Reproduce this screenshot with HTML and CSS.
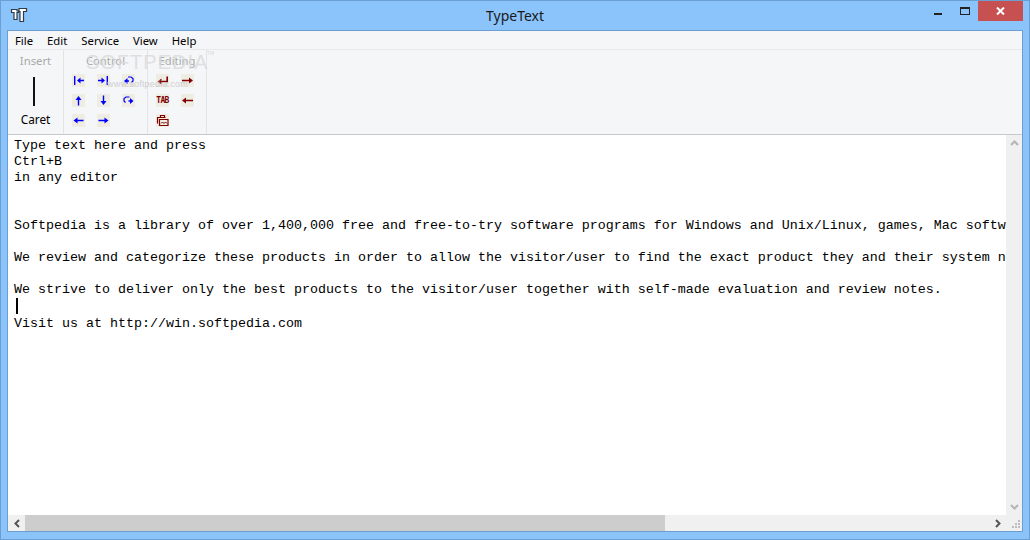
FILE: index.html
```html
<!DOCTYPE html>
<html lang="en">
<head>
<meta charset="utf-8">
<title>TypeText</title>
<link rel="stylesheet" href="styles.css">
</head>
<body>
<div class="window">
  <header class="titlebar">
    <svg class="app-icon" width="18" height="15" viewBox="0 0 18 15">
      <path d="M1.5 4.5V1.5H7V3H9V0.5H16.5V3.5H13.5V13.5H10V3.5H8.5V4.5H7V11.5H4V4.5Z" fill="#fff" stroke="#2f3b47" stroke-width="1.2"/>
    </svg>
    <div class="title">TypeText</div>
    <div class="controls">
      <span class="ctl"><i class="min"></i></span>
      <span class="ctl"><i class="max"></i></span>
      <span class="close">
        <svg width="9" height="8" viewBox="0 0 9 8"><path d="M1 0.5L8 7.5M8 0.5L1 7.5" stroke="#fff" stroke-width="2"/></svg>
      </span>
    </div>
  </header>
  <div class="client">
    <nav class="menu">
      <span>File</span><span>Edit</span><span>Service</span><span>View</span><span>Help</span>
    </nav>
    <section class="ribbon">
      <div class="group insert">
        <div class="gtitle">Insert</div>
        <div class="caret-bar"></div>
        <div class="caret-label">Caret</div>
      </div>
      <div class="group control">
        <div class="gtitle">Control</div>
        <div class="grid grid3">
          <span class="btn blue"><svg viewBox="0 0 13 13"><path d="M2 2h1.4v9H2zM5 6.5L8.5 3.5V5.8H12V7.2H8.5V9.5Z"/></svg></span>
          <span class="btn blue"><svg viewBox="0 0 13 13"><path d="M9.6 2H11v9H9.6zM8 6.5L4.5 3.5V5.8H1V7.2H4.5V9.5Z"/></svg></span>
          <span class="btn blue"><svg viewBox="0 0 13 13"><path d="M2 7L5.5 4V6.3H7V7.7H5.5V10Z"/><path d="M6 3H9L11 4.5V7L9.5 8.5" fill="none" stroke="#00f" stroke-width="1.2"/></svg></span>
          <span class="btn blue"><svg viewBox="0 0 13 13"><path d="M6.5 2L9.5 6H7.2V11.5H5.8V6H3.5Z"/></svg></span>
          <span class="btn blue"><svg viewBox="0 0 13 13"><path d="M6.5 11L9.5 7H7.2V1.5H5.8V7H3.5Z"/></svg></span>
          <span class="btn blue"><svg viewBox="0 0 13 13"><path d="M11.5 7L8 4V6.3H6.5V7.7H8V10Z"/><path d="M7.5 3H4L2 4.5V7L3.5 8.5" fill="none" stroke="#00f" stroke-width="1.2"/></svg></span>
          <span class="btn blue"><svg viewBox="0 0 13 13"><path d="M1.5 6.5L5.5 3.5V5.8H11.5V7.2H5.5V9.5Z"/></svg></span>
          <span class="btn blue"><svg viewBox="0 0 13 13"><path d="M11.5 6.5L7.5 3.5V5.8H1.5V7.2H7.5V9.5Z"/></svg></span>
        </div>
      </div>
      <div class="group editing">
        <div class="gtitle">Editing</div>
        <div class="grid grid2">
          <span class="btn red"><svg viewBox="0 0 13 13"><path d="M1.5 7.5L5.5 4.5V6.8H10.4V2.5H12V8.2H5.5V10.5Z"/></svg></span>
          <span class="btn red"><svg viewBox="0 0 13 13"><path d="M12 6.5L8 3.5V5.7H1V7.3H8V9.5Z"/></svg></span>
          <span class="btn tab">TAB</span>
          <span class="btn red"><svg viewBox="0 0 13 13"><path d="M1 6.5L5 3.5V5.7H12V7.3H5V9.5Z"/></svg></span>
          <span class="btn"><svg viewBox="0 0 13 13"><path d="M4.5 3V1.5H8.5V3M1.5 9.5V3.5H9.5M3.5 11.5V5.5H12V11.5Z" fill="none" stroke="#800000" stroke-width="1.2"/><path d="M5 9.5L6.5 8L8 9.5L9.5 8L11 9.5" fill="none" stroke="#800000"/></svg></span>
        </div>
      </div>
      <div class="wm wm-big">SOFTPEDIA</div>
      <div class="wm wm-tm">TM</div>
      <div class="wm wm-url">www.softpedia.com</div>
    </section>
    <main class="editor-row">
      <div class="editor">
        <div class="ln">Type text here and press</div>
        <div class="ln">Ctrl+B</div>
        <div class="ln">in any editor</div>
        <div class="ln">&nbsp;</div>
        <div class="ln">&nbsp;</div>
        <div class="ln">Softpedia is a library of over 1,400,000 free and free-to-try software programs for Windows and Unix/Linux, games, Mac software, Windows drivers</div>
        <div class="ln">&nbsp;</div>
        <div class="ln">We review and categorize these products in order to allow the visitor/user to find the exact product they and their system need.</div>
        <div class="ln">&nbsp;</div>
        <div class="ln">We strive to deliver only the best products to the visitor/user together with self-made evaluation and review notes.</div>
        <div class="ln caret-line"><i class="text-caret"></i></div>
        <div class="ln">Visit us at http://win.softpedia.com</div>
      </div>
      <aside class="vscroll">
        <svg width="9" height="6" viewBox="0 0 9 6"><path d="M1 5L4.5 1.5L8 5" fill="none" stroke="#b5b5b5" stroke-width="2"/></svg>
        <svg width="9" height="6" viewBox="0 0 9 6"><path d="M1 1L4.5 4.5L8 1" fill="none" stroke="#b5b5b5" stroke-width="2"/></svg>
      </aside>
    </main>
    <footer class="hscroll">
      <span class="arrow"><svg width="6" height="9" viewBox="0 0 6 9"><path d="M5 1L1.5 4.5L5 8" fill="none" stroke="#555" stroke-width="2"/></svg></span>
      <div class="track"><div class="thumb"></div></div>
      <span class="arrow"><svg width="6" height="9" viewBox="0 0 6 9"><path d="M1 1L4.5 4.5L1 8" fill="none" stroke="#555" stroke-width="2"/></svg></span>
      <svg class="grip" width="16" height="16" viewBox="0 0 16 16"><path d="M11 5h2v2h-2zM8 8h2v2H8zM11 8h2v2h-2zM5 11h2v2H5zM8 11h2v2H8zM11 11h2v2h-2z" fill="#bdbdbd"/></svg>
    </footer>
  </div>
</div>
</body>
</html>
```
FILE: styles.css
```css
html, body { margin: 0; height: 100%; }
body { overflow: hidden; font-family: "Noto Sans", "Open Sans", sans-serif; }
.window {
  box-sizing: border-box; width: 1030px; height: 540px;
  background: #8bc4fb; border: 1px solid #6b9fd2;
  display: flex; flex-direction: column; padding: 0 6px 7px;
}
.titlebar { height: 29px; flex: none; position: relative; }
.app-icon { position: absolute; left: 3px; top: 7px; }
.title { position: absolute; left: 0; right: 0; top: 5px; text-align: center; font-size: 14px; line-height: 20px; color: #1a1a1a; }
.controls { position: absolute; right: 0; top: 0; display: flex; height: 20px; }
.ctl { width: 26px; display: flex; align-items: center; justify-content: center; }
.min { width: 8px; height: 2px; background: #222; display: block; margin-top: 6px; margin-right: 2px; }
.max { box-sizing: border-box; width: 10px; height: 8px; border: 1px solid #222; border-top-width: 2px; display: block; }
.close { width: 45px; height: 20px; background: #c75050; display: flex; align-items: center; justify-content: center; }
.client {
  flex: 1; min-height: 0; display: flex; flex-direction: column;
  border: 1px solid #6b9fd2; background: #fff;
}
.menu { height: 18px; flex: none; background: #f5f6f7; display: flex; padding-left: 7px; gap: 14px; font-size: 11.3px; line-height: 19px; color: #000; border-bottom: 1px solid #e8e9ea; }
.ribbon { height: 84px; flex: none; background: #f5f6f7; border-bottom: 1px solid #c8c8c8; display: flex; position: relative; overflow: hidden; }
.group { box-sizing: border-box; border-right: 1px solid #e3e4e6; display: flex; flex-direction: column; align-items: center; }
.insert { width: 56px; }
.control { width: 84px; }
.editing { width: 59px; }
.gtitle { font-size: 11.3px; line-height: 14px; height: 14px; margin-top: 4px; color: #a9a9a9; }
.caret-bar { width: 2px; height: 29px; background: #111; margin: 9px 4px 0 0; }
.caret-label { font-size: 11.8px; line-height: 14px; color: #000; margin-top: 6px; }
.grid { display: grid; grid-auto-rows: 13px; row-gap: 7px; column-gap: 12px; margin-top: 6px; align-self: flex-start; margin-left: 8px; }
.grid3 { grid-template-columns: repeat(3, 13px); }
.grid2 { grid-template-columns: repeat(2, 13px); }
.btn { width: 13px; height: 13px; background: #efece3; display: block; }
.btn svg { width: 13px; height: 13px; display: block; }
.blue svg { fill: #00f; }
.red svg { fill: #800000; }
.tab { font: bold 8px/13px "DejaVu Sans Mono", monospace; color: #800000; text-align: center; letter-spacing: -0.6px; }
.wm { position: absolute; white-space: nowrap; }
.wm-big { left: 78px; top: 0; font-size: 20px; line-height: 24px; letter-spacing: 1px; color: #d9dadc; opacity: 0.8; font-family: "Liberation Sans", sans-serif; }
.wm-tm { left: 199px; top: -1px; font-size: 5px; line-height: 8px; color: #d8d9da; }
.wm-url { left: 99px; top: 27px; font-size: 9px; line-height: 14px; letter-spacing: 0.2px; color: #c8c9cb; opacity: 0.85; font-family: "Liberation Sans", sans-serif; }
.editor-row { flex: 1; min-height: 0; display: flex; }
.editor { flex: 1; min-width: 0; overflow: hidden; padding: 3px 0 0 6px; background: #fff; font: 13.33px/16px "Liberation Mono", "Courier New", monospace; color: #000; }
.ln { height: 16px; white-space: pre; }
.caret-line { height: 18px; }
.text-caret { display: block; width: 2px; height: 16px; background: #000; margin-left: 2px; }
.vscroll { width: 16px; flex: none; background: #f0f0f0; display: flex; flex-direction: column; justify-content: space-between; align-items: center; padding: 5px 0; box-sizing: border-box; }
.hscroll { height: 16px; flex: none; background: #f0f0f0; display: flex; align-items: center; }
.arrow { width: 17px; flex: none; display: flex; justify-content: center; }
.track { flex: 1; height: 16px; }
.thumb { width: 640px; height: 16px; background: #cdcdcd; }
.grip { flex: none; margin: 0 -1px 0 1px; }
```
